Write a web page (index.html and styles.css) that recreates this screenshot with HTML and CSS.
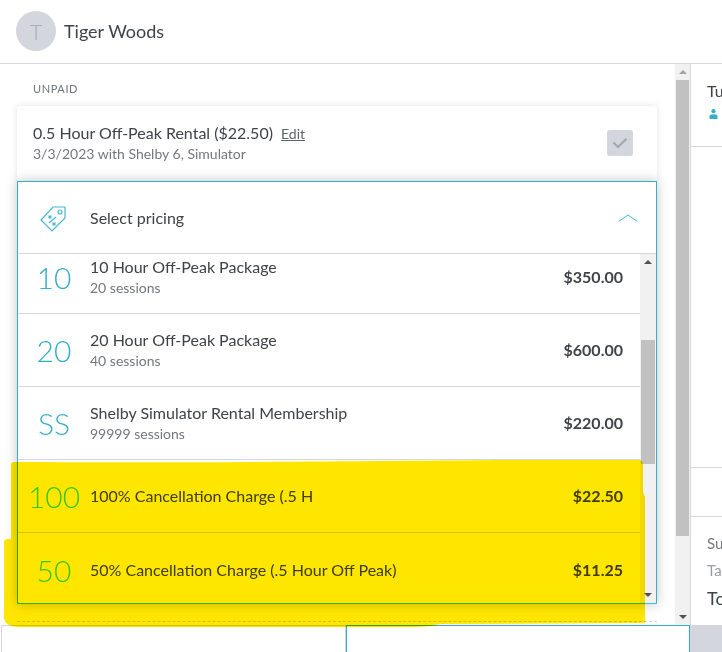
FILE: index.html
```html
<!DOCTYPE html>
<html lang="en">
<head>
<meta charset="utf-8">
<title>Select pricing</title>
<link rel="stylesheet" href="styles.css">
</head>
<body>
<div class="app">
  <header class="top">
    <div class="avatar">T</div>
    <div class="client">Tiger Woods</div>
  </header>
  <div class="middle">
    <main class="main">
      <div class="main-content">
        <div class="label">UNPAID</div>
        <div class="card">
          <div class="card-text">
            <div class="card-title">0.5 Hour Off-Peak Rental ($22.50) <a class="edit">Edit</a></div>
            <div class="card-sub">3/3/2023 with Shelby 6, Simulator</div>
          </div>
          <div class="check">
            <svg width="16" height="12" viewBox="0 0 16 12"><path d="M1.5 5.5 6 10 14.5 1.8" fill="none" stroke="#a4a8ae" stroke-width="2.2"/></svg>
          </div>
        </div>
        <section class="dropdown">
          <div class="dd-head">
            <svg class="tag" width="28" height="28" viewBox="0 0 28 28"><g fill="none" stroke="#45b8d0" stroke-width="1.2"><path d="M3 16 15 3H27V14L14 27Z"/><circle cx="22" cy="8" r="2"/><path d="M11 19 18 13"/></g><rect x="10.500" y="11.500" width="3" height="3" fill="#45b8d0"/><rect x="14.500" y="18.500" width="3" height="3" fill="#45b8d0"/></svg>
            <span class="dd-title">Select pricing</span>
            <svg class="chev" width="20" height="8" viewBox="0 0 20 8"><path d="M.5 7.5 10 1 19.500 7.500" fill="none" stroke="#45b8d0" stroke-width="1"/></svg>
          </div>
          <div class="dd-body">
            <div class="dd-list">
              <div class="row row-first"><span class="abbr">10</span><div class="info"><div class="name">10 Hour Off-Peak Package</div><div class="sess">20 sessions</div></div><span class="price">$350.00</span></div>
              <div class="row"><span class="abbr">20</span><div class="info"><div class="name">20 Hour Off-Peak Package</div><div class="sess">40 sessions</div></div><span class="price">$600.00</span></div>
              <div class="row"><span class="abbr">SS</span><div class="info"><div class="name">Shelby Simulator Rental Membership</div><div class="sess">99999 sessions</div></div><span class="price">$220.00</span></div>
              <div class="row row-marked"><span class="abbr">100</span><div class="info"><div class="name">100% Cancellation Charge (.5 H</div></div><span class="price">$22.50</span></div>
              <div class="row row-marked row-last"><span class="abbr">50</span><div class="info"><div class="name">50% Cancellation Charge (.5 Hour Off Peak)</div></div><span class="price">$11.25</span></div>
            </div>
            <div class="sbar sbar-in">
              <i class="up"></i>
              <div class="track"><div class="thumb thumb-in"></div></div>
              <i class="down"></i>
            </div>
          </div>
        </section>
        <div class="dashed"></div>
      </div>
      <div class="sbar sbar-out">
        <i class="up"></i>
        <div class="track"><div class="thumb thumb-out"></div></div>
        <i class="down"></i>
      </div>
    </main>
    <aside class="side">
      <div class="side-top">
        <div class="side-name">Tu</div>
        <svg class="person" width="9" height="10" viewBox="0 0 9 10"><circle cx="4.500" cy="2.200" r="2.100" fill="#35aec8"/><path d="M.5 10V7.500C.5 6 2 5.200 4.500 5.200S8.500 6 8.500 7.500V10Z" fill="#35aec8"/></svg>
      </div>
      <div class="side-space"></div>
      <div class="side-gap"></div>
      <div class="totals">
        <div class="t-row">Su</div>
        <div class="t-row t-tax">Ta</div>
        <div class="t-row t-total">To</div>
      </div>
    </aside>
  </div>
  <footer class="bottom">
    <div class="foot foot-a"></div>
    <div class="foot foot-b"></div>
    <div class="foot foot-c"></div>
  </footer>
  <svg class="marker" width="722" height="652" viewBox="0 0 722 652"><path d="M14 462 C180 463 400 461 520 460 L640 460 Q643 461 643 466 L643 492 L645 497 L645 623 L440 624 Q430 627 416 627 L20 627 Q5 627 4 618 L4 542 Q4 539 8 539 L11 539 L11 465 Q11 462 14 462Z" fill="#ffe600"/></svg>
</div>
</body>
</html>
```
FILE: styles.css
```css
* { box-sizing: border-box; }
html, body { margin: 0; padding: 0; }
body { font-family: Lato, "Open Sans", sans-serif; color: #3f4347; background: #fff; }
.app { position: relative; width: 722px; height: 652px; overflow: hidden; display: flex; flex-direction: column; }

.top { height: 64px; flex: none; display: flex; align-items: center; gap: 8px; padding: 0 16px 1px; border-bottom: 1px solid #d5d7dc; }
.avatar { width: 40px; height: 40px; border-radius: 50%; background: #d3d6dc; color: #a9adb4; font-size: 21px; font-weight: 300; display: flex; align-items: center; justify-content: center; }
.client { font-size: 18px; color: #3f4347; }

.middle { flex: 1; min-height: 0; display: flex; }
.main { width: 691px; flex: none; display: flex; border-right: 1px solid #d5d7dc; }
.main-content { width: 675px; flex: none; padding: 0 0 0 17px; background: #fff; }
.label { font-size: 11px; line-height: 14px; letter-spacing: .6px; color: #707479; padding: 18px 0 0 16px; height: 42px; }
.card { width: 640px; height: 75px; background: #fff; border-radius: 3px 3px 0 0; box-shadow: 0 0 6px rgba(60,65,75,.14); display: flex; justify-content: space-between; padding: 17px 24px 0 16px; }
.card-title { font-size: 16px; line-height: 20px; color: #3f4347; }
.edit { font-size: 14px; color: #5f6368; text-decoration: underline; margin-left: 4px; }
.card-sub { font-size: 14px; line-height: 20px; color: #74787d; }
.check { width: 26px; height: 26px; margin-top: 7px; border-radius: 3px; background: #d3d6dc; display: flex; align-items: center; justify-content: center; }

.dropdown { position: relative; width: 640px; height: 423px; background: #fff; border: 1px solid #35aec8; border-bottom-color: #2fc8d4; border-radius: 1px; box-shadow: 0 0 12px rgba(50,55,65,.3); display: flex; flex-direction: column; }
.dd-head { height: 72px; flex: none; display: flex; align-items: center; padding: 0 18px 0 20px; border-bottom: 1px solid #d5d7dc; }
.dd-title { font-size: 16px; margin-left: 24px; flex: 1; color: #3f4347; }
.dd-body { flex: 1; min-height: 0; display: flex; }
.dd-list { flex: 1; min-width: 0; overflow: hidden; }
.row { height: 73px; display: flex; align-items: center; padding-right: 17px; border-bottom: 1px solid #d5d7dc; }
.row-first { margin-top: -13px; }
.row-last { border-bottom: 0; }
.abbr { width: 72px; flex: none; text-align: center; font-size: 30px; font-weight: 300; color: #35aec8; }
.row-marked .abbr { color: #3cdce0; }
.info { flex: 1; min-width: 0; }
.name { font-size: 16px; line-height: 20px; color: #3f4347; }
.sess { font-size: 14px; line-height: 20px; color: #74787d; margin-top: 1px; }
.price { font-size: 16px; line-height: 20px; font-weight: 700; color: #3f4347; }

.sbar { width: 16px; flex: none; background: #f1f1f1; display: flex; flex-direction: column; align-items: center; }
.track { flex: 1; width: 100%; }
.up, .down { width: 0; height: 0; flex: none; border-left: 4px solid transparent; border-right: 4px solid transparent; margin: 6px 0; }
.sbar-in .up { border-bottom: 4px solid #505050; }
.sbar-in .down { border-top: 4px solid #505050; }
.sbar-out .up { border-bottom: 4px solid #a3a3a3; }
.sbar-out .down { border-top: 4px solid #505050; }
.thumb { background: #c1c1c1; margin: 0 auto; width: 14px; }
.thumb-in { margin-top: 70px; height: 124px; }
.thumb-out { margin-top: 0; height: 456px; width: 13px; }
.sbar-out { width: 15px; }

.dashed { width: 640px; margin-top: 17px; border-top: 1px dashed #d5d7dc; }

.side { flex: 1; min-width: 0; display: flex; flex-direction: column; overflow: hidden; white-space: nowrap; }
.side-top { height: 83px; flex: none; padding: 17px 0 0 16px; border-bottom: 1px solid #d5d7dc; }
.side-name { font-size: 16px; line-height: 20px; color: #3f4347; }
.person { display: block; margin: 8px 0 0 2px; }
.side-space { height: 321px; flex: none; border-bottom: 1px solid #d5d7dc; }
.side-gap { height: 49px; flex: none; border-bottom: 1px solid #d5d7dc; }
.totals { padding: 16px 0 0 16px; }
.t-row { font-size: 15px; line-height: 20px; color: #74787d; margin-bottom: 7px; }
.t-tax { color: #9a9ea3; }
.t-total { font-size: 18px; color: #3f4347; margin-top: 8px; }

.bottom { height: 27px; flex: none; display: flex; padding-left: 1px; background: #fff; }
.foot { height: 100%; border-top: 1px solid #d5d7dc; }
.foot-a { width: 345px; border-left: 1px solid #d5d7dc; border-right: 1px solid #d5d7dc; }
.foot-b { width: 344px; border: 1px solid #35aec8; border-bottom: 0; }
.foot-c { flex: 1; background: #d3d6dc; border: 0; }

.marker { position: absolute; left: 0; top: 0; mix-blend-mode: multiply; pointer-events: none; }
```
